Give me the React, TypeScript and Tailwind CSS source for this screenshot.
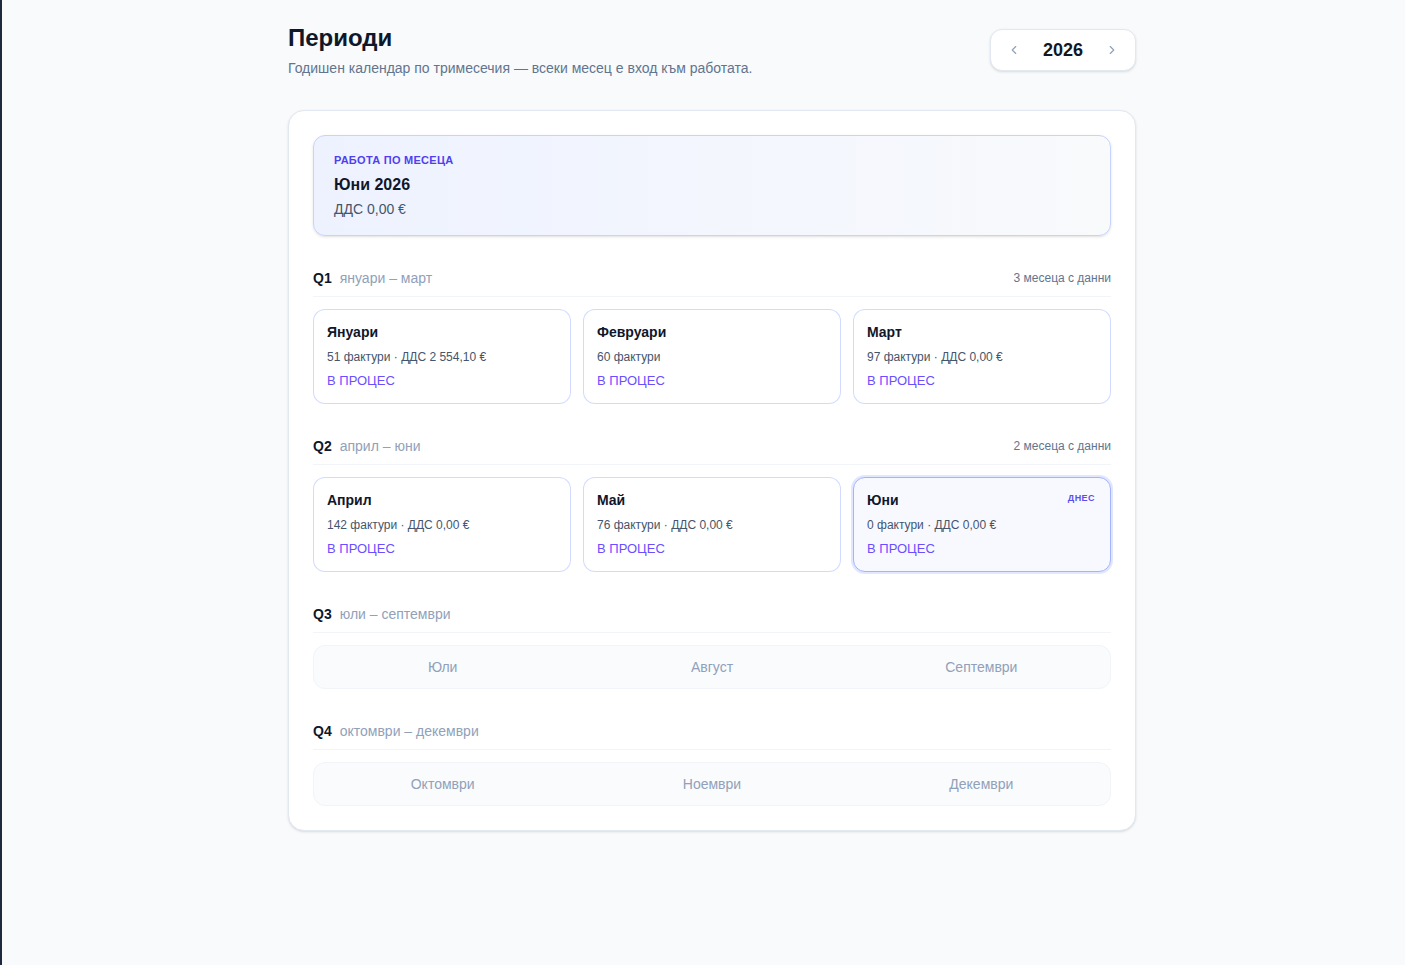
import React from "react";
import { ChevronLeft, ChevronRight } from "lucide-react";

type Month = {
    name: string;
    meta?: string;
    today?: boolean;
};

type Quarter = {
    id: string;
    range: string;
    count?: string;
    months: Month[];
    empty?: boolean;
};

const quarters: Quarter[] = [
    {
        id: "Q1",
        range: "януари – март",
        count: "3 месеца с данни",
        months: [
            { name: "Януари", meta: "51 фактури · ДДС 2 554,10 €" },
            { name: "Февруари", meta: "60 фактури" },
            { name: "Март", meta: "97 фактури · ДДС 0,00 €" },
        ],
    },
    {
        id: "Q2",
        range: "април – юни",
        count: "2 месеца с данни",
        months: [
            { name: "Април", meta: "142 фактури · ДДС 0,00 €" },
            { name: "Май", meta: "76 фактури · ДДС 0,00 €" },
            { name: "Юни", meta: "0 фактури · ДДС 0,00 €", today: true },
        ],
    },
    {
        id: "Q3",
        range: "юли – септември",
        empty: true,
        months: [{ name: "Юли" }, { name: "Август" }, { name: "Септември" }],
    },
    {
        id: "Q4",
        range: "октомври – декември",
        empty: true,
        months: [{ name: "Октомври" }, { name: "Ноември" }, { name: "Декември" }],
    },
];

const MonthCard = ({ month }: { month: Month }) => (
    <div
        className={
            month.today
                ? "relative rounded-xl border border-indigo-300 bg-[#f8f9ff] ring-2 ring-indigo-100 px-[13px] pt-[12px] pb-3"
                : "relative rounded-xl border border-indigo-200/80 bg-white px-[13px] pt-[12px] pb-3"
        }
    >
        {month.today && (
            <span className="absolute right-[15px] top-[14px] text-[9px] font-bold tracking-wider text-[#5b4ef0]">
                ДНЕС
            </span>
        )}
        <div className="text-sm font-bold leading-5 text-slate-900">{month.name}</div>
        <div className="mt-[7px] text-xs leading-4 text-slate-600">{month.meta}</div>
        <div className="mt-[6px] text-[13px] leading-5 text-[#6b4eff]">В ПРОЦЕС</div>
    </div>
);

const QuarterBlock = ({ q }: { q: Quarter }) => (
    <section>
        <div className="flex items-center justify-between border-b border-slate-100 pb-2">
            <div className="flex items-center gap-2 text-sm leading-5">
                <span className="font-bold text-slate-900">{q.id}</span>
                <span className="text-slate-400">{q.range}</span>
            </div>
            {q.count && <span className="text-xs text-slate-500">{q.count}</span>}
        </div>
        {q.empty ? (
            <div className="mt-3 grid h-[44px] grid-cols-3 items-center gap-3 rounded-xl border border-slate-100 bg-slate-50/70 text-center text-sm text-slate-400">
                {q.months.map((m) => (
                    <span key={m.name}>{m.name}</span>
                ))}
            </div>
        ) : (
            <div className="mt-3 grid grid-cols-3 gap-3">
                {q.months.map((m) => (
                    <MonthCard key={m.name} month={m} />
                ))}
            </div>
        )}
    </section>
);

const App: React.FC = () => {
    return (
        <div
            className="min-h-screen border-l-2 border-slate-800 bg-slate-50 pb-20"
            style={{ fontFamily: "'Liberation Sans', Arial, sans-serif" }}
        >
            <div className="ml-[286px] w-[848px] pt-[22px]">
                {/* Header */}
                <header className="flex items-center justify-between">
                    <div>
                        <h1 className="text-2xl font-bold leading-8 text-slate-900">Периоди</h1>
                        <p className="mt-1 text-sm leading-5 text-slate-500">
                            Годишен календар по тримесечия — всеки месец е вход към работата.
                        </p>
                    </div>
                    <div className="flex h-[42px] w-[146px] items-center justify-between rounded-xl border border-slate-200 bg-white px-4 shadow-sm">
                        <ChevronLeft className="h-3.5 w-3.5 text-slate-400" strokeWidth={2} />
                        <span className="text-lg font-bold text-slate-900">2026</span>
                        <ChevronRight className="h-3.5 w-3.5 text-slate-400" strokeWidth={2} />
                    </div>
                </header>

                {/* Calendar card */}
                <div className="mt-8 rounded-2xl border border-slate-200 bg-white p-6 shadow-sm">
                    <div className="rounded-xl border border-indigo-200 bg-gradient-to-r from-indigo-50 to-slate-50 px-5 pt-4 pb-4 shadow-sm">
                        <div className="text-[11px] font-bold leading-4 tracking-wide text-[#4f3ff0]">
                            РАБОТА ПО МЕСЕЦА
                        </div>
                        <div className="mt-[5px] text-base font-bold leading-6 text-slate-900">Юни 2026</div>
                        <div className="mt-[2px] text-sm leading-5 text-slate-600">ДДС 0,00 €</div>
                    </div>

                    <div className="mt-8 space-y-8">
                        {quarters.map((q) => (
                            <QuarterBlock key={q.id} q={q} />
                        ))}
                    </div>
                </div>
            </div>
        </div>
    );
};

export default App;
